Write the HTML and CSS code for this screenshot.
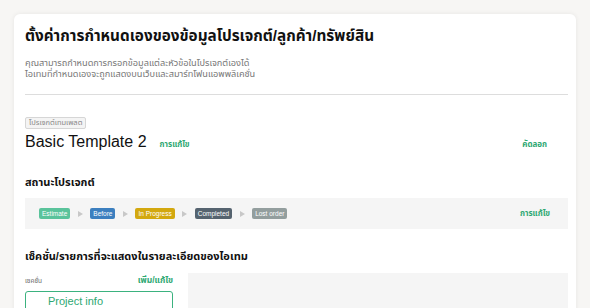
FILE: index.html
```html
<!DOCTYPE html>
<html lang="th">
<head>
<meta charset="utf-8">
<link rel="stylesheet" href="styles.css">
</head>
<body>
<div class="card">
  <h1 class="title">ตั้งค่าการกำหนดเองของข้อมูลโปรเจกต์/ลูกค้า/ทรัพย์สิน</h1>
  <p class="desc">คุณสามารถกำหนดการกรอกข้อมูลแต่ละหัวข้อในโปรเจกต์เองได้<br>ไอเทมที่กำหนดเองจะถูกแสดงบนเว็บและสมาร์ทโฟนแอพพลิเคชั่น</p>
  <hr class="divider">
  <span class="tag">โปรเจกต์เทมเพลต</span>
  <div class="tpl-row">
    <span class="tpl-name">Basic Template 2</span>
    <a class="link">การแก้ไข</a>
    <a class="link copy">คัดลอก</a>
  </div>
  <h2 class="section">สถานะโปรเจกต์</h2>
  <div class="status-bar">
    <span class="badge estimate">Estimate</span><span class="arrow"></span>
    <span class="badge before">Before</span><span class="arrow"></span>
    <span class="badge progress">In Progress</span><span class="arrow"></span>
    <span class="badge completed">Completed</span><span class="arrow"></span>
    <span class="badge lost">Lost order</span>
    <a class="link status-edit">การแก้ไข</a>
  </div>
  <h2 class="section section2">เซ็คชั่น/รายการที่จะแสดงในรายละเอียดของไอเทม</h2>
  <div class="sections">
    <div class="left">
      <div class="left-head">
        <span class="small-label">เซคชั่น</span>
        <a class="link add">เพิ่ม/แก้ไข</a>
      </div>
      <div class="sec-item">Project info</div>
    </div>
    <div class="right-panel"></div>
  </div>
</div>
</body>
</html>
```

FILE: styles.css
```css
* { box-sizing: border-box; }
html, body { margin: 0; padding: 0; }
body {
  background: #f7f6f4;
  font-family: "Liberation Sans", "Noto Sans Thai", "Noto Sans", sans-serif;
  color: #1a1a1a;
  padding: 14px 14px 0 14px;
  width: 590px;
  height: 308px;
  overflow: hidden;
}
.card {
  background: #fff;
  border-radius: 6px;
  box-shadow: 0 0 5px rgba(0,0,0,0.07);
  padding: 9px 8px 20px 11px;
  height: 320px;
}
.title {
  margin: 0;
  font-size: 15.3px;
  font-weight: bold;
  line-height: 26px;
  color: #111;
}
.desc {
  margin: 9px 0 0 0;
  font-size: 9.2px;
  line-height: 11px;
  color: #777;
}
.divider {
  border: 0;
  border-top: 1px solid #ddd;
  margin: 14px 0 0 0;
}
.tag {
  display: inline-block;
  margin-top: 22px;
  border: 1px solid #d6d6d6;
  background: #f4f4f4;
  border-radius: 2px;
  font-size: 7.5px;
  line-height: 10px;
  padding: 0 3px;
  color: #888;
}
.tpl-row {
  display: flex;
  align-items: baseline;
  margin-top: 2px;
  padding-right: 21px;
}
.tpl-name {
  font-size: 16px;
  line-height: 22px;
  color: #111;
}
.link {
  color: #2ea872;
  font-weight: bold;
  font-size: 8px;
}
.tpl-row .link { margin-left: 13px; }
.tpl-row .copy { margin-left: auto; }
.section {
  margin: 20px 0 0 0;
  font-size: 11px;
  font-weight: bold;
  line-height: 18px;
  color: #111;
}
.status-bar {
  margin-top: 7px;
  background: #f5f5f5;
  height: 31px;
  display: flex;
  align-items: center;
  padding: 0 18px 0 14px;
}
.badge {
  font-size: 6.5px;
  color: #fff;
  line-height: 11px;
  padding: 0 3px;
  border-radius: 2px;
}
.arrow {
  width: 0; height: 0;
  border-left: 5px solid #c8c8c8;
  border-top: 3px solid transparent;
  border-bottom: 3px solid transparent;
  margin: 0 7.5px;
}
.estimate { background: #5ac39b; }
.before { background: #3c7fbf; }
.progress { background: #d3a80f; }
.completed { background: #55636f; }
.lost { background: #939e9e; }
.status-edit { margin-left: auto; }
.section2 { margin-top: 18px; }
.sections {
  display: flex;
  gap: 15px;
  margin-top: 8px;
}
.left { width: 148px; }
.left-head {
  display: flex;
  justify-content: space-between;
  align-items: baseline;
  padding-top: 1px;
}
.small-label { font-size: 6.5px; color: #666; }
.add { font-size: 8.5px; }
.sec-item {
  margin-top: 4px;
  border: 1.5px solid #3bb27f;
  border-radius: 3px;
  height: 30px;
  padding: 1px 0 0 22px;
  font-size: 11px;
  color: #2ea872;
  line-height: 16px;
}
.right-panel {
  flex: 1;
  background: #f5f5f5;
  height: 60px;
}
```
